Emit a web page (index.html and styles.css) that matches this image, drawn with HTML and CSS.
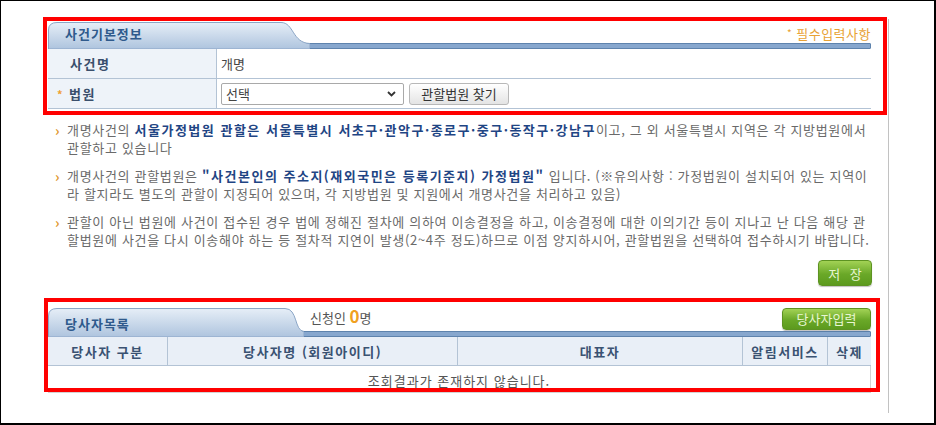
FILE: index.html
```html
<!DOCTYPE html>
<html lang="ko">
<head>
<meta charset="utf-8">
<title>사건기본정보</title>
<link rel="stylesheet" href="styles.css">
</head>
<body>
<div class="frame">
  <div class="wrap">
    <div class="content">
      <section class="panel">
        <div class="sec-head">
          <div class="tab">
            <svg class="tab-bg" width="262" height="27" viewBox="0 0 262 27" aria-hidden="true">
              <defs>
                <linearGradient id="tg1" x1="0" y1="0" x2="0" y2="1">
                  <stop offset="0" stop-color="#e6eef7"/>
                  <stop offset="1" stop-color="#aec4de"/>
                </linearGradient>
              </defs>
              <path d="M0.5,27 L0.5,8 Q0.5,0.5 9,0.5 L233,0.5 C246,0.5 244,21 262,21.5 L262,27 Z" fill="url(#tg1)" stroke="#8aa5c6" stroke-width="1"/>
            </svg>
            <span class="tab-title">사건기본정보</span>
          </div>
          <span class="req"><span class="req-star">*</span> 필수입력사항</span>
        </div>
        <div class="sec-bar"></div>
        <div class="form">
          <div class="f-label">사건명</div>
          <div class="f-value">개명</div>
          <div class="f-label"><span class="dot">*</span>법원</div>
          <div class="f-value">
            <div class="sel-wrap">
              <select class="sel"><option>선택</option></select>
              <svg class="chev" width="9" height="6" viewBox="0 0 9 6" aria-hidden="true"><path d="M1 1 L4.5 4.5 L8 1" fill="none" stroke="#333" stroke-width="1.8"/></svg>
            </div>
            <button class="btn-gray">관할법원 찾기</button>
          </div>
        </div>
      </section>

      <div class="notes">
        <p class="note"><span class="arr">›</span><span class="nt">개명사건의 <b>서울가정법원 관할은 서울특별시 서초구·관악구·종로구·중구·동작구·강남구</b>이고, 그 외 서울특별시 지역은 각 지방법원에서<br>관할하고 있습니다</span></p>
        <p class="note"><span class="arr">›</span><span class="nt">개명사건의 관할법원은 <b>"사건본인의 주소지(재외국민은 등록기준지) 가정법원"</b> 입니다. (※유의사항 : 가정법원이 설치되어 있는 지역이<br>라 할지라도 별도의 관할이 지정되어 있으며, 각 지방법원 및 지원에서 개명사건을 처리하고 있음)</span></p>
        <p class="note"><span class="arr">›</span><span class="nt">관할이 아닌 법원에 사건이 접수된 경우 법에 정해진 절차에 의하여 이송결정을 하고, 이송결정에 대한 이의기간 등이 지나고 난 다음 해당 관<br>할법원에 사건을 다시 이송해야 하는 등 절차적 지연이 발생(2~4주 정도)하므로 이점 양지하시어, 관할법원을 선택하여 접수하시기 바랍니다.</span></p>
      </div>

      <div class="save-row"><button class="btn-green btn-save">저 장</button></div>

      <section class="panel panel2">
        <div class="sec-head head2">
          <div class="tab">
            <svg class="tab-bg" width="256" height="29" viewBox="0 0 256 29" aria-hidden="true">
              <defs>
                <linearGradient id="tg2" x1="0" y1="0" x2="0" y2="1">
                  <stop offset="0" stop-color="#e6eef7"/>
                  <stop offset="1" stop-color="#aec4de"/>
                </linearGradient>
              </defs>
              <path d="M0.5,29 L0.5,8 Q0.5,0.5 9,0.5 L237,0.5 C250,0.5 246,23 256,23.5 L256,29 Z" fill="url(#tg2)" stroke="#8aa5c6" stroke-width="1"/>
            </svg>
            <span class="tab-title">당사자목록</span>
          </div>
          <span class="count">신청인 <b>0</b>명</span>
          <button class="btn-green btn-add">당사자입력</button>
        </div>
        <div class="sec-bar"></div>
        <div class="grid">
          <div class="th">당사자 구분</div>
          <div class="th">당사자명 (회원아이디)</div>
          <div class="th">대표자</div>
          <div class="th">알림서비스</div>
          <div class="th last">삭제</div>
          <div class="empty">조회결과가 존재하지 않습니다.</div>
        </div>
      </section>
    </div>
  </div>
  <div class="mark mark1"></div>
  <div class="mark mark2"></div>
</div>
</body>
</html>
```

FILE: styles.css
```css
html, body {
  margin: 0;
  padding: 0;
  background: #fff;
}
body {
  font-family: "Noto Sans CJK KR", "Noto Sans", sans-serif;
  font-size: 13px;
  color: #666;
}
.frame {
  position: relative;
  width: 936px;
  height: 425px;
  box-sizing: border-box;
  border: 1px solid #000;
  border-right-width: 2px;
  border-bottom-width: 2px;
  overflow: hidden;
}
.wrap {
  margin-top: 18px;
  width: 888px;
  height: 394px;
  box-sizing: border-box;
  border-right: 1px solid #c2c2c2;
  padding-left: 47px;
  padding-top: 3px;
}
.content {
  width: 823px;
}

/* section heads */
.sec-head {
  display: flex;
  align-items: flex-start;
  height: 21px;
}
.tab {
  position: relative;
  width: 262px;
  height: 27px;
  flex: none;
  z-index: 1;
}
.tab-bg {
  position: absolute;
  left: 0;
  top: 0;
  display: block;
}
.tab-title {
  position: relative;
  display: block;
  padding-left: 17px;
  line-height: 24px;
  font-weight: bold;
  font-size: 13px;
  letter-spacing: 1px;
  color: #2f5a8c;
}
.req {
  margin-left: auto;
  margin-top: 3px;
  font-size: 13px;
  line-height: 16px;
  letter-spacing: 0.5px;
  color: #e8a234;
}
.req-star {
  font-size: 10px;
  vertical-align: 2px;
}
.sec-bar {
  height: 4px;
  background: #87a7ce;
  border: 1px solid #5e83ad;
  border-radius: 1px;
}

/* form */
.form {
  display: grid;
  grid-template-columns: 169px 1fr;
}
.f-label {
  height: 30px;
  box-sizing: border-box;
  border-bottom: 1px solid #b3c3d5;
  border-right: 1px solid #b3c3d5;
  background: #eef3f9;
  padding-left: 22px;
  line-height: 30px;
  font-weight: bold;
  letter-spacing: 1.5px;
  color: #3a4f6c;
  display: flex;
  align-items: center;
}
.dot {
  color: #f0a030;
  font-size: 11px;
  margin-left: -13px;
  width: 12px;
}
.f-value {
  height: 30px;
  box-sizing: border-box;
  border-bottom: 1px solid #b3c3d5;
  padding-left: 4px;
  display: flex;
  align-items: center;
  color: #444;
}
.sel-wrap {
  position: relative;
  width: 183px;
  height: 22px;
}
.sel {
  appearance: none;
  -webkit-appearance: none;
  width: 100%;
  height: 22px;
  box-sizing: border-box;
  border: 1px solid #a9a9a9;
  border-radius: 2px;
  background: #fff;
  padding: 0 0 0 4px;
  font-family: "Noto Sans CJK KR", "Noto Sans", sans-serif;
  font-size: 13px;
  color: #444;
}
.chev {
  position: absolute;
  right: 8px;
  top: 8px;
}
.btn-gray {
  margin-left: 5px;
  width: 100px;
  height: 22px;
  box-sizing: border-box;
  border: 1px solid #b8b8b8;
  border-radius: 3px;
  background: linear-gradient(#ffffff, #e4e4e4);
  font-family: "Noto Sans CJK KR", "Noto Sans", sans-serif;
  font-size: 13px;
  color: #333;
  padding: 0;
  line-height: 20px;
}

/* notes */
.notes {
  margin-top: 12px;
}
.note {
  margin: 0 0 10px 0;
  display: flex;
  line-height: 18px;
}
.note:last-child {
  margin-bottom: 0;
}
.arr {
  width: 19px;
  flex: none;
  padding-left: 7px;
  box-sizing: border-box;
  color: #e0962c;
  font-weight: bold;
  font-size: 14px;
}
.nt {
  white-space: nowrap;
  color: #6a6a6a;
  font-size: 13px;
  letter-spacing: 0.68px;
}
.nt b {
  color: #1f4584;
  letter-spacing: 1.5px;
}

/* buttons */
.save-row {
  display: flex;
  justify-content: flex-end;
  margin-top: 11px;
  margin-right: -1px;
}
.btn-green {
  box-sizing: border-box;
  border: 1px solid #5d9322;
  border-radius: 4px;
  background: linear-gradient(#a2d255, #6aa828 55%, #5c9a1e);
  color: #e8f6d2;
  font-family: "Noto Sans CJK KR", "Noto Sans", sans-serif;
  font-size: 13px;
  padding: 0;
  box-shadow: 0 1px 1px rgba(0,0,0,0.25);
}
.btn-save {
  width: 54px;
  height: 26px;
  letter-spacing: 3px;
  text-indent: 3px;
}
.btn-add {
  width: 89px;
  height: 22px;
  line-height: 20px;
  margin-left: auto;
}

/* panel 2 */
.panel2 {
  margin-top: 22px;
}
.head2 {
  height: 23px;
}
.head2 .tab {
  width: 256px;
  height: 29px;
}
.head2 .tab-title {
  line-height: 32px;
}
.count {
  margin-left: 6px;
  line-height: 16px;
  margin-top: 0;
  color: #555;
  font-size: 13px;
}
.count b {
  color: #f0a020;
  font-size: 17px;
  line-height: 16px;
}
.grid {
  display: grid;
  grid-template-columns: 120px 290px 285px 85px 43px;
  border-bottom: 1px solid #d3d3d3;
}
.th {
  height: 29px;
  box-sizing: border-box;
  background: #e9eff7;
  border-right: 1px solid #b3c3d5;
  border-bottom: 1px solid #b3c3d5;
  display: flex;
  align-items: center;
  justify-content: center;
  font-weight: bold;
  color: #3a5272;
  letter-spacing: 1.5px;
}
.th.last {
  border-right: none;
}
.empty {
  grid-column: 1 / -1;
  height: 26px;
  line-height: 30px;
  text-align: center;
  color: #555;
  letter-spacing: 1px;
  border-right: 1px solid #d3d3d3;
}

/* red annotation marks */
.mark {
  position: absolute;
  box-sizing: border-box;
  border: 4px solid #ff0000;
  pointer-events: none;
  z-index: 5;
}
.mark1 {
  left: 42px;
  top: 16px;
  width: 844px;
  height: 98px;
}
.mark2 {
  left: 43px;
  top: 297px;
  width: 836px;
  height: 94px;
}
```
